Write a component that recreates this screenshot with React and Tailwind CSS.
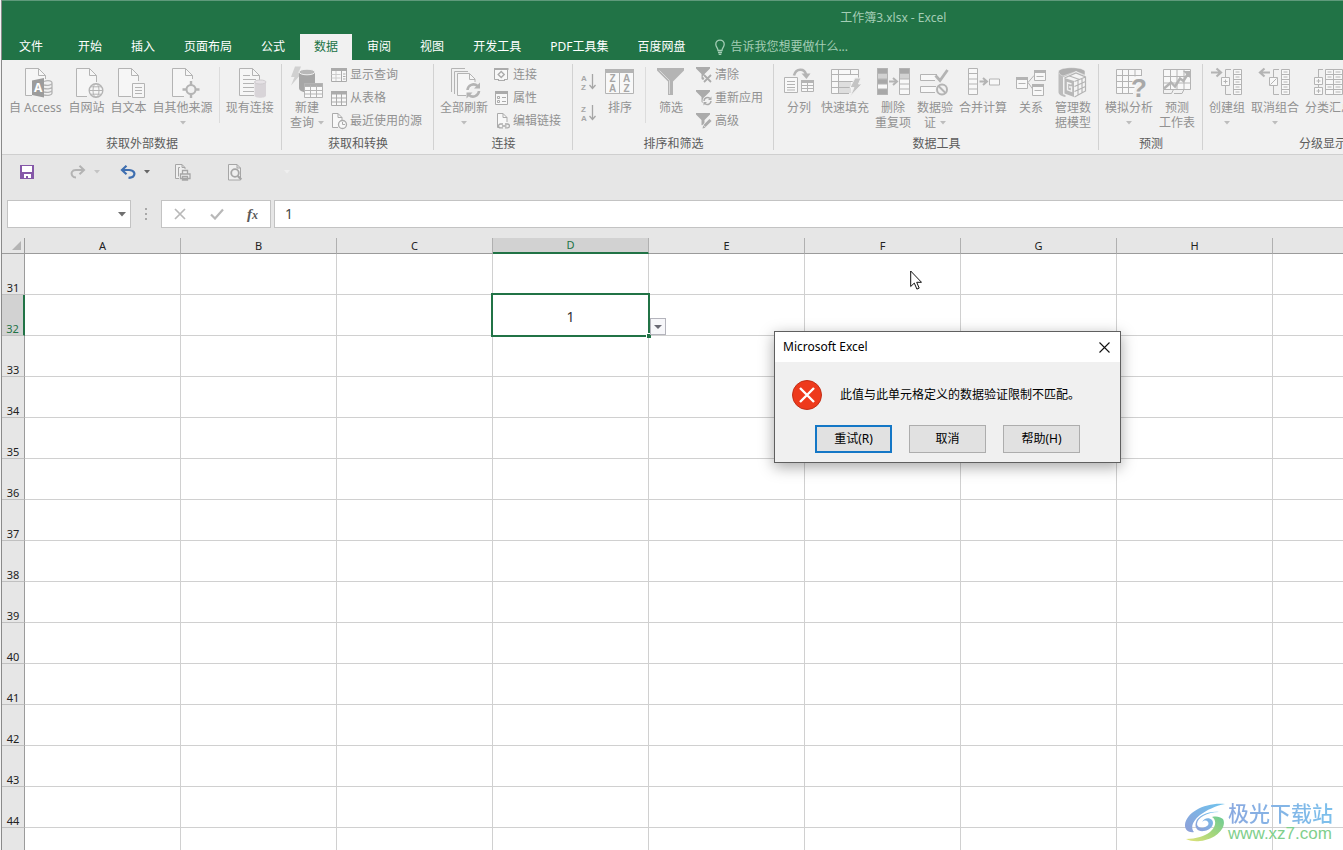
import React from "react";

const columns = ["A", "B", "C", "D", "E", "F", "G", "H", "I", "J", "K", "L"];
const rows = Array.from({ length: 20 }, (_, i) => 31 + i);

/* ---------- icon helpers ---------- */

function Icon({ children, big = true }) {
  return (
    <svg
      viewBox={big ? "0 0 32 32" : "0 0 16 16"}
      className={
        big
          ? "mb-px block h-8 w-8 shrink-0 overflow-visible text-[#b4b4b4]"
          : "block h-4 w-4 shrink-0 overflow-visible text-[#ababab]"
      }
      fill="none"
      stroke="currentColor"
      aria-hidden="true"
    >
      {children}
    </svg>
  );
}

const AccessIcon = () => (
  <Icon>
    <path d="M13 28.500H6.500V1.500H19.500l7 7V12" fill="#f6f6f6" />
    <path d="M19.500 1.500v7h7" />
    <path d="M25 14.500c5-2 8 0 8 1.200v10.600c0 1.600-4 2.700-8 1.700M25 18c4 1 7.500 0 8-1.500M25 21.500c4 1 7.500 0 8-1.500M25 25c4 1 7.500 0 8-1.500" strokeWidth="1.300" />
    <path d="M13 13.500l12-2.500v19.500l-12-2.500z" fill="#9c9c9c" stroke="none" />
    <text x="15" y="25" fontSize="12" fontWeight="700" fill="#fff" stroke="none" fontFamily="Noto Sans">A</text>
  </Icon>
);

const WebIcon = () => (
  <Icon>
    <path d="M16 29.500H5.500V1.500H18.500l7 7V15" fill="#f6f6f6" />
    <path d="M18.500 1.500v7h7" />
    <circle cx="25" cy="23.500" r="6.800" fill="#f6f6f6" strokeWidth="1.400" />
    <ellipse cx="25" cy="23.500" rx="3" ry="6.800" />
    <path d="M18.200 23.500h13.600M19.500 19.800h11M19.500 27.200h11" />
  </Icon>
);

const TextIcon = () => (
  <Icon>
    <path d="M18 29.500H5.500V1.500H18.500l7 7V14" fill="#f6f6f6" />
    <path d="M18.500 1.500v7h7" />
    <path d="M19.500 16.500h12v14h-12zM22 20.500h7M22 23.500h7M22 26.500h7" fill="#f6f6f6" />
  </Icon>
);

const SourceIcon = () => (
  <Icon>
    <path d="M17 29.500H5.500V1.500H18.500l7 7V12" fill="#f6f6f6" />
    <path d="M18.500 1.500v7h7" />
    <circle cx="24" cy="22.500" r="4.500" strokeWidth="2" fill="#f1f1f1" />
    <path d="M24 14v4M24 27v4M15.500 22.500h4M28.500 22.500h4" strokeWidth="2.400" />
  </Icon>
);

const ExistingIcon = () => (
  <Icon>
    <path d="M20 28.500H5.500V1.500H18.500l7 7V13" fill="#f6f6f6" />
    <path d="M18.500 1.500v7h7M9 8.500h7M9 12.500h13M9 16.500h11M9 20.500h11M9 24.500h11" />
    <path d="M20.500 15v13.500c0 3 11.500 3 11.500 0V15z" fill="#d8d4d8" stroke="none" />
    <ellipse cx="26.250" cy="15" rx="5.750" ry="2" fill="#e6e2e6" stroke="#cfcccf" />
  </Icon>
);

const NewQueryIcon = () => (
  <Icon>
    <path d="M4-.500h6L7.500 6H11L0 18.500 3.500 10H0z" fill="#d0d0d0" stroke="none" />
    <path d="M8 5v16c0 3.500 6 4.500 8 4.500L24 16V5z" fill="#a6a6a6" stroke="none" />
    <ellipse cx="16" cy="5" rx="8" ry="2.800" fill="#b8b8b8" stroke="#f1f1f1" />
    <path d="M13.500 16.500h18v14h-18z" fill="#fafafa" />
    <path d="M13.500 16.500h18v3h-18z" fill="#adadad" />
    <path d="M13.500 23.500h18M13.500 27h18M19.500 18v12.500M25.500 18v12.500" />
  </Icon>
);

const RefreshAllIcon = () => (
  <Icon>
    <path d="M3.500 25V1.500H17M6.500 27V4.500H20" />
    <path d="M18 28.500H9.500V6.500H21.500l5.500 5.500V15" fill="#f6f6f6" />
    <path d="M21.500 6.500v6H27" />
    <g strokeWidth="2.600">
      <path d="M19.500 23a6 6 0 0 1 10-4" />
      <path d="M31 24a6 6 0 0 1-10 4" />
    </g>
    <path d="M32 15.500v6h-6zM18.500 31.500v-6h6z" fill="currentColor" stroke="none" />
  </Icon>
);

const SortIcon = () => (
  <Icon>
    <path d="M1.500 3h28v23.500h-28z" fill="#f8f8f8" />
    <path d="M1 2h29v4H1z" fill="currentColor" stroke="none" />
    <path d="M15.500 6v20.500" />
    <g fill="#a6a6a6" stroke="none" fontSize="10" fontFamily="Liberation Sans" fontWeight="700" textAnchor="middle">
      <text x="8.500" y="15">Z</text>
      <text x="8.500" y="25">A</text>
      <text x="22.500" y="15">A</text>
      <text x="22.500" y="25">Z</text>
    </g>
  </Icon>
);

const FilterIcon = () => (
  <Icon>
    <path d="M2 1h27v2.500L18 14.500V28h-5V14.500L2 3.500z" fill="currentColor" stroke="none" />
    <path d="M4.500 3.500L14.500 13.500V27" stroke="#d8d8d8" />
  </Icon>
);

const SplitIcon = () => (
  <Icon>
    <path d="M1.500 10.500h13v15h-13zM4 14.500h8M4 17.500h8M4 20.500h8M4 23h8" fill="#f8f8f8" />
    <path d="M18.500 13.500h12v11h-12z" fill="#f8f8f8" />
    <path d="M18 13h13v3H18z" fill="currentColor" stroke="none" />
    <path d="M24.500 15v9M18.500 18.500h12M18.500 21.500h12" />
    <path d="M11 8.500C13 1 21.500 1 23 7.500" strokeWidth="2.600" />
    <path d="M18.500 6.500h9L23.500 12z" fill="currentColor" stroke="none" />
  </Icon>
);

const FlashFillIcon = () => (
  <Icon>
    <path d="M29.500 12V2.500H2.500v24H20" fill="#f8f8f8" />
    <path d="M10 14h12v12H10z" fill="#dedede" stroke="none" />
    <path d="M2.500 7.500h27M2.500 14.500h22M2.500 20.500h19M9.500 2.500v24M21.500 2.500v5" />
    <path d="M26 11h6l-2.500 6H33L21 29.500l4-9h-4z" fill="#c4c4c4" stroke="#f1f1f1" />
  </Icon>
);

const DedupeIcon = () => (
  <Icon>
    <path d="M.500 1.500h10v26H.500z" fill="#f8f8f8" />
    <path d="M.500 1.500h10v5H.500zM.500 12h10v5H.500zM.500 22h10v5.500H.500z" fill="#a8a8a8" />
    <path d="M.500 6.500h10V12H.500z" fill="#d2d2d2" />
    <path d="M12 14.500h7" strokeWidth="2" />
    <path d="M16 11l4 3.500-4 3.500" strokeWidth="2" />
    <path d="M22.500 1.500h10v26h-10z" fill="#f8f8f8" />
    <path d="M22.500 1.500h10v5h-10z" fill="#a8a8a8" />
    <path d="M22.500 6.500h10V12h-10z" fill="#d2d2d2" />
    <path d="M22.500 17h10M22.500 22h10" />
  </Icon>
);

const ValidationIcon = () => (
  <Icon>
    <path d="M18 7.500H1.500v6H16M17 19.500H1.500v6H16" fill="#f8f8f8" />
    <path d="M16.500 8.500l4.500 5L28.500 3" strokeWidth="2.800" />
    <circle cx="23" cy="22.500" r="5" strokeWidth="2" />
    <path d="M19.500 19l7 7" strokeWidth="2" />
  </Icon>
);

const ConsolidateIcon = () => (
  <Icon>
    <path d="M1.500 1.500h9v26h-9zM1.500 6.500h9M1.500 12h9M1.500 17h9M1.500 22h9M22.500 12h10v6h-10z" fill="#f8f8f8" />
    <path d="M12.500 14.500h7M16 11l4 3.500-4 3.500" strokeWidth="2" />
  </Icon>
);

const RelationIcon = () => (
  <Icon>
    <path d="M13 15.500l6-7M13 15.500l5 7" />
    <path d="M1.500 10.500h11v11h-11zM19.500 3.500h11v10h-11zM17.500 17.500h11v11h-11z" fill="#f8f8f8" />
    <path d="M1 10h12v3H1zM19 3h12v3H19zM17 17h12v3H17z" fill="currentColor" stroke="none" />
    <path d="M3.500 16.500h7M21.500 9.500h7M19.500 23.500h7" />
  </Icon>
);

const DataModelIcon = () => (
  <Icon>
    <path d="M1.500 5v20c0 2.500 3 4.500 7 5V11L19 7l9 2.500V5z" fill="#bcbcbc" stroke="none" />
    <path d="M1.500 4C4-.500 25-.500 28 4v4L19 4.500 6 9C3 8 1.500 6.500 1.500 4z" fill="#b0b0b0" stroke="#f1f1f1" strokeWidth=".500" />
    <path d="M19 5.500l9.500 4.500v14L18 30.500l-11-4V11z" fill="#f4f4f4" stroke="#f1f1f1" strokeWidth="2" />
    <path d="M7.500 11l9.500 3v16l-9.500-3.500z" fill="#b8b8b8" stroke="none" />
    <path d="M14.500 17l-4-1.200v7l4 1.500V20H12" stroke="#f1f1f1" strokeWidth="1.400" />
    <path d="M7.500 11L19 6l9.500 4v14L17.500 30M17.500 14.500L28.500 10M21 13v15.500M25 11.500v14.500M17.500 19.500l11-5M17.500 24.500l11-5M12.500 9l10 3.500" strokeWidth="1.200" />
  </Icon>
);

const WhatIfIcon = () => (
  <Icon>
    <path d="M28.500 9V2.500H3.500v24H20M3.500 8.500h25M3.500 14.500h16M3.500 20.500h18M9.500 2.500v24M15.500 2.500v24M22 2.500v7" fill="#f8f8f8" />
    <text x="18" y="30" fontSize="26" fontWeight="700" fill="#a8a8a8" stroke="none" fontFamily="Liberation Sans">?</text>
  </Icon>
);

const ForecastIcon = () => (
  <Icon>
    <path d="M2.500 2.500h27v20h-27zM2.500 9.500h27M2.500 16h27M9.500 2.500v20M16 2.500v20M23 2.500v20" fill="#f8f8f8" />
    <path d="M2.500 22.500v4h8l2-4M13 26.500h8l2-4" />
    <path d="M3 21.500l7-6 4 4 5-8 3.500 2.500L28 5" strokeWidth="2.400" />
    <path d="M22 4h7.500v7.500z" fill="currentColor" stroke="none" />
  </Icon>
);

const OutlineColumn = () => (
  <path d="M22.500 2.500h8v25h-8zM22.500 7.500h8M22.500 12.500h8M22.500 17.500h8M22.500 22.500h8M24.500 5h4M24.500 10h4M24.500 15h4M24.500 20h4M24.500 25h4" fill="#f8f8f8" />
);

const GroupIcon = () => (
  <Icon>
    <path d="M0 5.500h9M5.500 1.500l4.500 4-4.500 4" strokeWidth="2.200" />
    <path d="M20 2.500h-5.500v8M14.500 19v8.500H20" />
    <path d="M10.500 10.500h8v8h-8zM12.500 14.500h4M14.500 12.500v4" fill="#f8f8f8" />
    <OutlineColumn />
  </Icon>
);

const UngroupIcon = () => (
  <Icon>
    <path d="M2 5.500h9M5.500 1.500L1 5.500l4.500 4" strokeWidth="2.200" />
    <path d="M20 2.500h-5.500v8M14.500 19v8.500H20" />
    <path d="M10.500 10.500h8v8h-8zM11.500 17.500l6-6" fill="#f8f8f8" />
    <OutlineColumn />
  </Icon>
);

const SubtotalIcon = () => (
  <Icon>
    <path d="M5 2.500h5M5.500 2.500V10M5.500 18v3" />
    <path d="M1.500 10.500h8v7h-8zM3.500 14h4M5.500 12v4M1.500 20.500h8v7h-8zM3.500 24h4M5.500 22v4" fill="#f8f8f8" />
    <path d="M12.500 2.500h17v25h-17zM12.500 7.500h17M12.500 12.500h17M12.500 17.500h17M12.500 22.500h17M20.500 2.500v25M14.500 5h4M14.500 10h4M14.500 20h4M22.500 5h5M22.500 10h5M22.500 15h5M22.500 20h5M22.500 25h5" fill="#f8f8f8" />
  </Icon>
);

/* small icons */
const ShowQueriesIcon = () => (
  <Icon big={false}>
    <path d="M.500 1.500h15v13H.500z" fill="#f8f8f8" />
    <path d="M0 1h16v3H0z" fill="currentColor" stroke="none" />
    <path d="M.500 7.500h9M.500 11h9M5 4v10" stroke="#cccccc" />
    <path d="M10.500 4v10.500M12 7h2.500M12 9.500h2.500M12 12h2.500" />
  </Icon>
);
const FromTableIcon = () => (
  <Icon big={false}>
    <path d="M.500 1.500h15v14H.500z" fill="#f8f8f8" />
    <path d="M0 1h16v3.500H0z" fill="currentColor" stroke="none" />
    <path d="M.500 8h15M.500 12h15M5.500 4v11.500M10.500 4v11.500" />
  </Icon>
);
const RecentIcon = () => (
  <Icon big={false}>
    <path d="M7 14.500H1.500v-14H7l4 4V7" fill="#f8f8f8" />
    <path d="M7 .500v4h4" />
    <circle cx="11.500" cy="11.500" r="4" strokeWidth="1.300" fill="#f8f8f8" />
    <path d="M11.500 9v2.500H14" />
  </Icon>
);
const ConnectionsIcon = () => (
  <Icon big={false}>
    <path d="M5 12.500H.500v-11h13v11H10" fill="#f8f8f8" />
    <path d="M0 1h14.500v2H0z" fill="currentColor" stroke="none" />
    <path d="M7.200 4.500l3 3-3 3-3-3z" strokeWidth="1.400" />
    <path d="M4 13.500h7" />
  </Icon>
);
const PropertiesIcon = () => (
  <Icon big={false}>
    <path d="M1.500 1.500h12v13h-12z" fill="#f8f8f8" />
    <path d="M1 1h13v3H1z" fill="currentColor" stroke="none" />
    <path d="M3.500 6.500h2v2h-2zM3.500 10.500h2v2h-2zM8 7.500h4M8 11.500h4" />
  </Icon>
);
const EditLinksIcon = () => (
  <Icon big={false}>
    <path d="M5 14.500H3.500v-14H9l4 4V9" fill="#f8f8f8" />
    <path d="M9 .500v4h4" />
    <path d="M9 11H6.500a1.900 1.900 0 0 0 0 3.800H9M11 11h2.500a1.900 1.900 0 0 1 0 3.800H11M8 13h4.500" strokeWidth="1.300" />
  </Icon>
);
const SmallFunnel = () => (
  <path d="M0 0h14v1.500L8.500 7v7L5.500 12V7L0 1.500z" fill="currentColor" stroke="none" />
);
const ClearIcon = () => (
  <Icon big={false}>
    <SmallFunnel />
    <path d="M8 8l7 7M15 8l-7 7" stroke="#f1f1f1" strokeWidth="4" />
    <path d="M8 8l7 7M15 8l-7 7" strokeWidth="1.800" />
  </Icon>
);
const ReapplyIcon = () => (
  <Icon big={false}>
    <SmallFunnel />
    <circle cx="11.500" cy="11" r="5" fill="#f1f1f1" stroke="none" />
    <path d="M8 11a3.500 3.500 0 0 1 6-2.500M15 11a3.500 3.500 0 0 1-6 2.500" strokeWidth="1.500" />
    <path d="M15.500 6.500v3.500H12zM7.500 15.500V12H11z" fill="currentColor" stroke="none" />
  </Icon>
);
const AdvancedIcon = () => (
  <Icon big={false}>
    <SmallFunnel />
    <path d="M7.500 14.500l7-7" stroke="#f1f1f1" strokeWidth="5" />
    <path d="M8.500 13l6-6" strokeWidth="3" />
    <path d="M6.500 15.500l.800-3 2.200 2.200z" fill="currentColor" stroke="none" />
  </Icon>
);

function SortArrowIcon({ top, bottom }) {
  return (
    <svg viewBox="0 0 16 18" className="block h-[18px] w-4 overflow-visible text-[#a6a6a6]" aria-hidden="true">
      <g fill="currentColor" fontSize="8" fontWeight="700" fontFamily="Liberation Sans">
        <text x="0" y="8">{top}</text>
        <text x="0" y="17">{bottom}</text>
      </g>
      <path d="M11.500 1v14M8.500 12l3 3.500 3-3.500" fill="none" stroke="currentColor" strokeWidth="1.300" />
    </svg>
  );
}

function Caret({ className = "text-[#bdbdbd]" }) {
  return (
    <svg viewBox="0 0 6 4" className={`inline-block h-1 w-1.5 ${className}`} aria-hidden="true">
      <path d="M0 0h6L3 3.500z" fill="currentColor" />
    </svg>
  );
}

/* ---------- ribbon pieces ---------- */

function BigButton({ icon, lines, caret, className = "" }) {
  return (
    <button type="button" className={`flex shrink-0 flex-col items-center px-[3px] ${className}`}>
      {icon}
      {lines.map((line, i) => (
        <span key={line} className="flex items-center gap-1 leading-[15px] whitespace-nowrap">
          {line}
          {caret === "inline" && i === lines.length - 1 && <Caret />}
        </span>
      ))}
      {caret === "below" && (
        <span className="flex h-[15px] items-center">
          <Caret />
        </span>
      )}
    </button>
  );
}

function SmallButton({ icon, children }) {
  return (
    <button type="button" className="flex h-[23px] items-center gap-[3px] leading-4 whitespace-nowrap">
      {icon}
      {children}
    </button>
  );
}

function Group({ title, className, inner, children }) {
  return (
    <section className={`relative flex shrink-0 flex-col ${className}`} aria-label={title}>
      <div className={`flex h-[76px] pt-[7px] ${inner}`}>{children}</div>
      <h2 className="text-center leading-4 text-[#5c5c5c]">{title}</h2>
      <span className="absolute top-1 right-0 bottom-1 w-px bg-[#d2d2d2]" />
    </section>
  );
}

const Divider = ({ className }) => <span className={`h-14 w-px shrink-0 bg-[#dcdcdc] ${className}`} />;

function Ribbon() {
  return (
    <div className="flex h-[95px] overflow-hidden border-b border-[#cfcfcf] bg-[#f1f1f1] text-[#929292]">
      <Group title="获取外部数据" className="w-[280px]" inner="pl-1">
        <BigButton icon={<AccessIcon />} lines={["自 Access"]} />
        <BigButton icon={<WebIcon />} lines={["自网站"]} className="ml-px" />
        <BigButton icon={<TextIcon />} lines={["自文本"]} />
        <BigButton icon={<SourceIcon />} lines={["自其他来源"]} caret="below" />
        <Divider className="mx-[3px]" />
        <BigButton icon={<ExistingIcon />} lines={["现有连接"]} />
      </Group>
      <Group title="获取和转换" className="w-[152px]" inner="pl-[5px]">
        <BigButton icon={<NewQueryIcon />} lines={["新建", "查询"]} caret="inline" />
        <div className="-mt-1 ml-1">
          <SmallButton icon={<ShowQueriesIcon />}>显示查询</SmallButton>
          <SmallButton icon={<FromTableIcon />}>从表格</SmallButton>
          <SmallButton icon={<RecentIcon />}>最近使用的源</SmallButton>
        </div>
      </Group>
      <Group title="连接" className="w-[139px]" inner="pl-[3px]">
        <BigButton icon={<RefreshAllIcon />} lines={["全部刷新"]} caret="below" />
        <div className="-mt-1 ml-[3px]">
          <SmallButton icon={<ConnectionsIcon />}>连接</SmallButton>
          <SmallButton icon={<PropertiesIcon />}>属性</SmallButton>
          <SmallButton icon={<EditLinksIcon />}>编辑链接</SmallButton>
        </div>
      </Group>
      <Group title="排序和筛选" className="w-[201px]" inner="pl-2">
        <div className="flex flex-col gap-[13px] pt-1.5">
          <button type="button" aria-label="升序">
            <SortArrowIcon top="A" bottom="Z" />
          </button>
          <button type="button" aria-label="降序">
            <SortArrowIcon top="Z" bottom="A" />
          </button>
        </div>
        <BigButton icon={<SortIcon />} lines={["排序"]} className="ml-1" />
        <Divider className="ml-1.5" />
        <BigButton icon={<FilterIcon />} lines={["筛选"]} className="ml-1.5" />
        <div className="-mt-1 ml-1.5">
          <SmallButton icon={<ClearIcon />}>清除</SmallButton>
          <SmallButton icon={<ReapplyIcon />}>重新应用</SmallButton>
          <SmallButton icon={<AdvancedIcon />}>高级</SmallButton>
        </div>
      </Group>
      <Group title="数据工具" className="w-[325px]" inner="pl-1.5">
        <BigButton icon={<SplitIcon />} lines={["分列"]} />
        <BigButton icon={<FlashFillIcon />} lines={["快速填充"]} />
        <BigButton icon={<DedupeIcon />} lines={["删除", "重复项"]} />
        <BigButton icon={<ValidationIcon />} lines={["数据验", "证"]} caret="inline" />
        <BigButton icon={<ConsolidateIcon />} lines={["合并计算"]} />
        <BigButton icon={<RelationIcon />} lines={["关系"]} className="ml-0.5" />
        <BigButton icon={<DataModelIcon />} lines={["管理数", "据模型"]} className="ml-0.5" />
      </Group>
      <Group title="预测" className="w-[104px]" inner="pl-[3px]">
        <BigButton icon={<WhatIfIcon />} lines={["模拟分析"]} caret="below" />
        <BigButton icon={<ForecastIcon />} lines={["预测", "工作表"]} />
      </Group>
      <Group title="分级显示" className="w-[240px]" inner="pl-[3px]">
        <BigButton icon={<GroupIcon />} lines={["创建组"]} caret="below" />
        <BigButton icon={<UngroupIcon />} lines={["取消组合"]} caret="below" />
        <BigButton icon={<SubtotalIcon />} lines={["分类汇总"]} />
      </Group>
    </div>
  );
}

/* ---------- header ---------- */

function Tab({ children, active }) {
  return (
    <button
      type="button"
      role="tab"
      aria-selected={!!active}
      className={`h-[26px] shrink-0 px-3.5 leading-[22px] whitespace-nowrap ${
        active ? "bg-[#f1f1f1] text-[#217346]" : "text-white"
      }`}
    >
      {children}
    </button>
  );
}

function Header() {
  return (
    <header className="border-t border-[#5f9a7b] bg-[#217346]">
      <h1 className="ml-[62.5%] h-[33px] leading-[33px] whitespace-nowrap text-[#a3cdb5]">工作簿3.xlsx - Excel</h1>
      <div className="flex items-center gap-px overflow-hidden pl-[3px]" role="tablist">
        <Tab>文件</Tab>
        <span className="w-[5px]" />
        {["开始", "插入", "页面布局", "公式", "数据", "审阅", "视图", "开发工具", "PDF工具集", "百度网盘"].map((t) => (
          <Tab key={t} active={t === "数据"}>
            {t}
          </Tab>
        ))}
        <label className="ml-3.5 flex flex-1 items-center gap-1">
          <svg viewBox="0 0 12 16" className="h-4 w-3 shrink-0 text-[#a3cdb5]" fill="none" stroke="currentColor" strokeWidth="1.300" aria-hidden="true">
            <path d="M4 11.500C4 9 1.800 8.300 1.800 5.300a4.200 4.200 0 0 1 8.400 0C10.200 8.300 8 9 8 11.500zM4 13.500h4M4.700 15.300h2.600" />
          </svg>
          <input
            aria-label="操作说明搜索"
            placeholder="告诉我您想要做什么..."
            className="w-40 bg-transparent leading-5 outline-none placeholder:text-[#a3cdb5]"
          />
        </label>
      </div>
    </header>
  );
}

function QuickAccess() {
  return (
    <div className="flex h-[34px] items-center pl-[18px]">
      <button type="button" aria-label="保存">
        <svg viewBox="0 0 14 14" className="h-3.5 w-3.5" aria-hidden="true">
          <path d="M0 0h14v14H0z" fill="#8558a8" />
          <path d="M2 1h10v6H2zM4 9h7v4H8v-2H6v2H4z" fill="#fff" />
        </svg>
      </button>
      <button type="button" aria-label="恢复" className="ml-9 flex items-center gap-2">
        <svg viewBox="0 0 16 14" className="h-3.5 w-4" fill="none" stroke="#b3b3b3" strokeWidth="2" aria-hidden="true">
          <path d="M14 5H6C2 5 .500 8 2.500 11c.800 1.200 2 1.600 3.500 1.600M9.500 .800L14 5 9.500 9.200" />
        </svg>
        <Caret className="text-[#c4c4c4]" />
      </button>
      <button type="button" aria-label="撤消" className="ml-5 flex items-center gap-2">
        <svg viewBox="0 0 16 14" className="h-3.5 w-4" fill="none" stroke="#3f6fb0" strokeWidth="2.200" aria-hidden="true">
          <path d="M2 5h7c5 0 6.500 3.500 4.500 6.200-.800 1.200-2.300 1.600-5 1.600M6.500 .800L2 5l4.500 4.200" />
        </svg>
        <Caret className="text-[#666666]" />
      </button>
      <button type="button" aria-label="快速打印" className="ml-6">
        <svg viewBox="0 0 17 17" className="h-[17px] w-[17px]" fill="none" stroke="#a6a6a6" aria-hidden="true">
          <path d="M5 14.500H1.500V.500H8l3 3V5M8 .500v3h3M4.500 12.500v-9H6" fill="#efefef" />
          <path d="M8.500 6.500h5V10h-5zM6.500 10h9.500v4.500H6.500zM8.500 12.500h5v3.500h-5z" strokeWidth="1.300" fill="#efefef" />
        </svg>
      </button>
      <button type="button" aria-label="打印预览和打印" className="ml-9">
        <svg viewBox="0 0 17 17" className="h-[17px] w-[17px]" fill="none" stroke="#a6a6a6" aria-hidden="true">
          <path d="M1.500 .500H10l3.500 3.500v12h-12zM10 .500V4h3.500" fill="#efefef" />
          <circle cx="8" cy="9" r="3.800" strokeWidth="1.800" fill="#efefef" />
          <path d="M10.800 12l3.500 3.500" strokeWidth="2.400" />
        </svg>
      </button>
      <button type="button" aria-label="自定义快速访问工具栏" className="ml-10 flex items-center">
        <Caret className="text-[#efefef]" />
      </button>
    </div>
  );
}

function FormulaBar() {
  return (
    <div className="flex h-[28px] pl-[5px]">
      <div className="flex w-[124px] shrink-0 items-center border border-[#c3c3c3] bg-white pr-1">
        <input aria-label="名称框" className="min-w-0 flex-1 px-1.5 outline-none" />
        <button type="button" aria-label="打开名称框列表" className="flex items-center">
          <svg viewBox="0 0 8 5" className="h-[5px] w-2" aria-hidden="true">
            <path d="M0 0h8L4 4.500z" fill="#6f6f6f" />
          </svg>
        </button>
      </div>
      <div className="flex w-[30px] shrink-0 flex-col items-center justify-center gap-[3px]">
        <span className="h-0.5 w-0.5 bg-[#a8a8a8]" />
        <span className="h-0.5 w-0.5 bg-[#a8a8a8]" />
        <span className="h-0.5 w-0.5 bg-[#a8a8a8]" />
      </div>
      <div className="flex w-[110px] shrink-0 items-center justify-between border border-[#c3c3c3] bg-white pr-3 pl-3">
        <button type="button" aria-label="取消输入">
          <svg viewBox="0 0 12 12" className="h-3 w-3" fill="none" stroke="#b8b8b8" strokeWidth="1.700" aria-hidden="true">
            <path d="M1 1l10 10M11 1L1 11" />
          </svg>
        </button>
        <button type="button" aria-label="输入">
          <svg viewBox="0 0 14 12" className="h-3 w-3.5" fill="none" stroke="#b8b8b8" strokeWidth="2.200" aria-hidden="true">
            <path d="M1 6.500l4 4L13 1.500" />
          </svg>
        </button>
        <button type="button" aria-label="插入函数" className="font-['Liberation_Serif',serif] text-[15px] leading-4 font-bold text-[#5a5a5a] italic">
          f<span className="text-xs">x</span>
        </button>
      </div>
      <input
        aria-label="编辑栏"
        defaultValue="1"
        className="ml-[3px] min-w-0 flex-1 border border-r-0 border-[#c3c3c3] bg-white px-2.5 text-sm text-[#444444] outline-none"
      />
    </div>
  );
}

/* ---------- sheet ---------- */

function Sheet() {
  return (
    <div className="mt-[10px] min-h-0 flex-1 overflow-hidden">
      <table className="w-max border-separate border-spacing-0">
        <colgroup>
          <col className="w-[23px]" />
          {columns.map((c) => (
            <col key={c} className="w-[156px]" />
          ))}
        </colgroup>
        <thead>
          <tr className="h-4">
            <th className="border-r border-b border-[#9b9b9b] bg-[#e6e6e6] p-0">
              <svg viewBox="0 0 9 9" className="ml-[10px] block h-[9px] w-[9px]" aria-hidden="true">
                <path d="M9 0v9H0z" fill="#b4b4b4" />
              </svg>
            </th>
            {columns.map((c) => (
              <th
                key={c}
                scope="col"
                className={
                  c === "D"
                    ? "border-r border-b-2 border-r-[#b0b0b0] border-b-[#217346] bg-[#d2d2d2] p-0 text-[11px] leading-[14px] font-normal text-[#217346]"
                    : "border-r border-b border-r-[#b0b0b0] border-b-[#9b9b9b] bg-[#e6e6e6] p-0 text-[11px] leading-[15px] font-normal text-[#222222]"
                }
              >
                {c}
              </th>
            ))}
          </tr>
        </thead>
        <tbody>
          {rows.map((r) => (
            <tr key={r} className="h-[41px]">
              <th
                scope="row"
                className={
                  r === 32
                    ? "border-r-2 border-b border-r-[#217346] border-b-[#c0c0c0] bg-[#d2d2d2] p-0 align-bottom text-[11px] leading-[13px] font-normal text-[#217346]"
                    : "border-r border-b border-r-[#9b9b9b] border-b-[#c0c0c0] bg-[#e6e6e6] p-0 align-bottom text-[11px] leading-[13px] font-normal text-[#222222]"
                }
              >
                {r}
              </th>
              {columns.map((c) =>
                c === "D" && r === 32 ? (
                  <td key={c} className="relative border-r border-b border-[#d0d0d0] bg-white p-0 pt-1 text-center text-sm text-[#333333]">
                    1
                    <span className="absolute -inset-0.5 border-2 border-[#217346]" />
                    <span className="absolute -right-[3px] -bottom-[3px] h-[5px] w-[5px] border-t border-l border-white bg-[#217346]" />
                    <button
                      type="button"
                      aria-label="选择值"
                      className="absolute bottom-0 left-full ml-0.5 flex h-[17px] w-4 items-center justify-center border border-[#b4b4bc] bg-[#f7f7fa]"
                    >
                      <svg viewBox="0 0 8 4" className="h-1 w-2" aria-hidden="true">
                        <path d="M0 0h8L4 4z" fill="#6a6a74" />
                      </svg>
                    </button>
                  </td>
                ) : (
                  <td key={c} className="border-r border-b border-[#d0d0d0] bg-white p-0" />
                )
              )}
            </tr>
          ))}
        </tbody>
      </table>
    </div>
  );
}

/* ---------- overlays ---------- */

function ErrorDialog() {
  const button = "h-7 w-[77px] border border-[#adadad] bg-[#e1e1e1] leading-4";
  return (
    <div
      role="alertdialog"
      aria-labelledby="dialog-title"
      aria-describedby="dialog-message"
      className="absolute top-[331px] left-[774px] w-[347px] border border-[#5f5f5f] bg-[#f0f0f0] text-black shadow-[0_4px_14px_rgba(0,0,0,0.35)]"
    >
      <div className="flex h-[30px] items-center justify-between bg-white pr-2.5 pl-2">
        <h2 id="dialog-title">Microsoft Excel</h2>
        <button type="button" aria-label="关闭">
          <svg viewBox="0 0 11 11" className="block h-[11px] w-[11px]" stroke="#111" strokeWidth="1.100" aria-hidden="true">
            <path d="M.500 .500l10 10M10.500 .500l-10 10" />
          </svg>
        </button>
      </div>
      <div className="flex items-center gap-[18px] pt-[18px] pl-[17px]">
        <svg viewBox="0 0 30 30" className="h-[30px] w-[30px] shrink-0" aria-hidden="true">
          <circle cx="15" cy="15" r="14.500" fill="#ee3a1c" stroke="#c22f17" />
          <path d="M8 8l14 14M22 8L8 22" stroke="#fff" strokeWidth="2.400" />
        </svg>
        <p id="dialog-message" className="leading-4 whitespace-nowrap">此值与此单元格定义的数据验证限制不匹配。</p>
      </div>
      <div className="flex gap-[17px] pt-[15px] pb-[9px] pl-10">
        <button type="button" className="h-7 w-[77px] border-2 border-[#1477c6] bg-[#e1e1e1] leading-4">重试(R)</button>
        <button type="button" className={button}>取消</button>
        <button type="button" className={button}>帮助(H)</button>
      </div>
    </div>
  );
}

function Pointer() {
  return (
    <svg viewBox="0 0 12 20" className="absolute top-[270px] left-[910px] h-5 w-3" aria-hidden="true">
      <path d="M.700 1v15.500l3.600-3.400 2.600 6 2.300-1-2.500-5.800h4.800z" fill="#fff" stroke="#111" strokeWidth="1" />
    </svg>
  );
}

function SiteMark() {
  return (
    <div className="absolute right-2.5 bottom-1.5 flex items-center gap-0.5">
      <svg viewBox="0 0 42 40" className="h-10 w-[42px]" aria-hidden="true">
        <defs>
          <linearGradient id="mark-blue" x1="0" y1="1" x2="1" y2="0">
            <stop offset="0" stopColor="#8f9fd8" />
            <stop offset="1" stopColor="#6fc4ee" />
          </linearGradient>
          <linearGradient id="mark-green" x1="0" y1="1" x2="1" y2="0">
            <stop offset="0" stopColor="#e3e37a" />
            <stop offset=".500" stopColor="#a4d67c" />
            <stop offset="1" stopColor="#6ccb96" />
          </linearGradient>
        </defs>
        <path d="M41 1C22-1 2 9 1 22c-.300 5 4 8 9 7C6 24 9 18 16 12 23 7 31 3 41 1z" fill="url(#mark-blue)" />
        <path d="M35 9c-12 0-22 6-22 12 0 4 6 5 10 2 2-1 2-4 0-5-2-1-4 0-5 1 2-4 7-5 10-2 3 4-1 10-8 11-6 1-10-3-8-9C14 13 24 8 35 9z" fill="url(#mark-blue)" />
        <path d="M28 14c5-1 8 0 11 2 4 7-5 20-23 22-5 .500-10 0-14-2 10 0 19-3 24-7 6-5 7-12 2-15z" fill="url(#mark-green)" />
      </svg>
      <div>
        <div className="bg-gradient-to-r from-[#8aa9e0] to-[#7cc0ec] bg-clip-text text-[21px] leading-[22px] font-medium text-transparent">极光下载站</div>
        <div className="font-['Liberation_Sans',sans-serif] text-[17px] leading-[20px] text-[#7fcf8c]">www.xz7.com</div>
      </div>
    </div>
  );
}

export default function App() {
  return (
    <div className="relative flex h-screen overflow-hidden bg-[#f4f4f4] pl-px font-['Noto_Sans','Noto_Sans_CJK_SC',sans-serif] text-xs">
      <div className="flex min-w-0 flex-1 flex-col border-l border-[#8a8a8a] bg-[#e6e6e6]">
        <Header />
        <Ribbon />
        <QuickAccess />
        <main className="flex min-h-0 flex-1 flex-col pt-[11px]">
          <FormulaBar />
          <Sheet />
        </main>
      </div>
      <Pointer />
      <ErrorDialog />
      <SiteMark />
    </div>
  );
}
